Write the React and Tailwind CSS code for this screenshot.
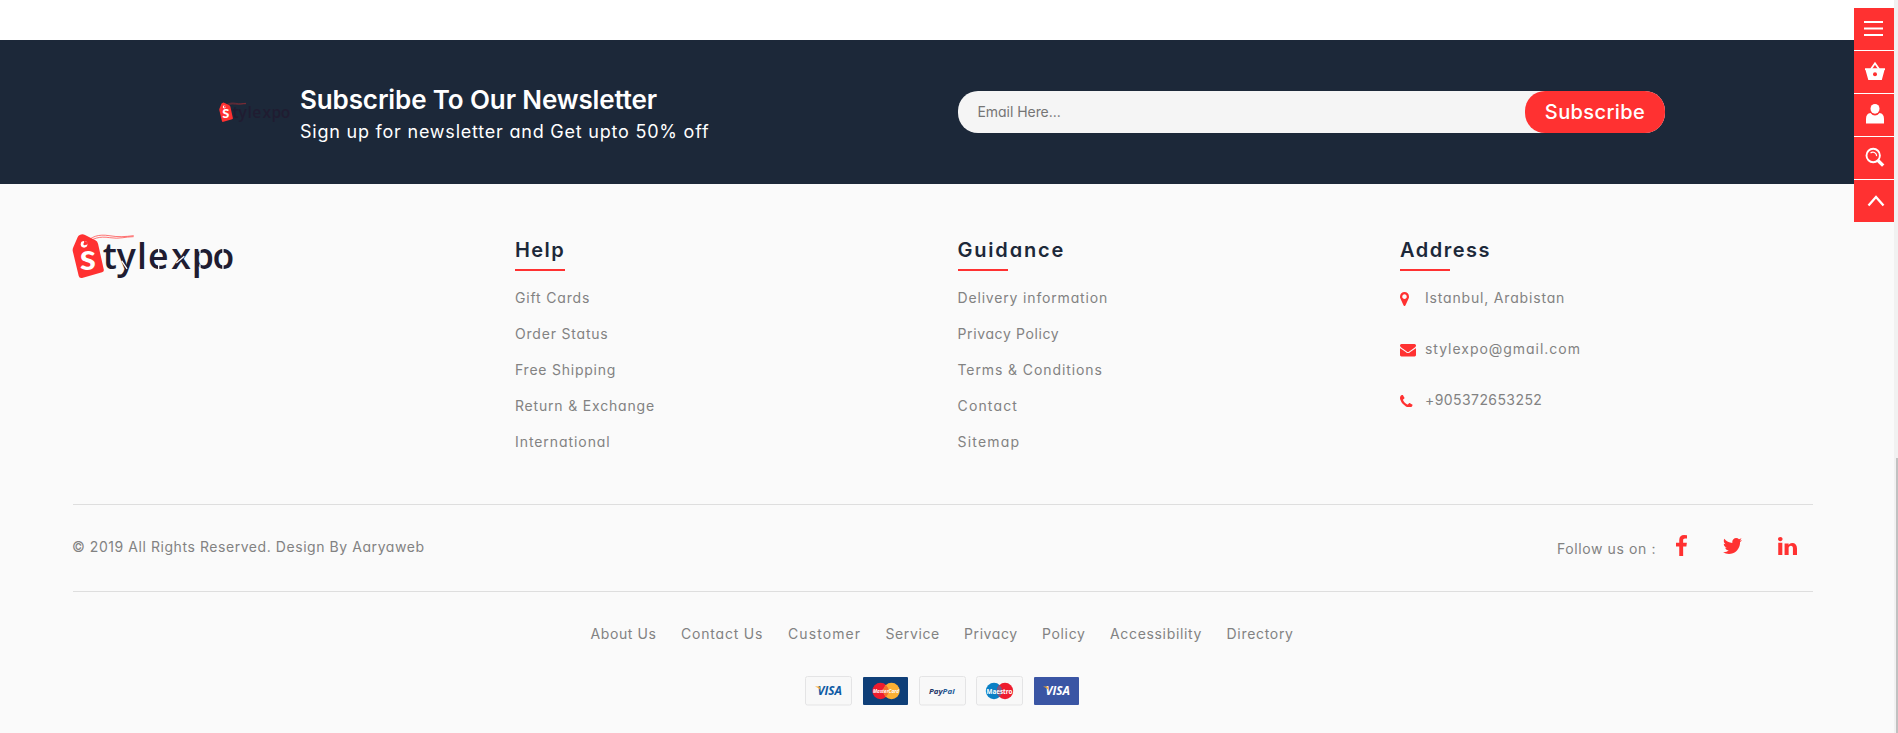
function StylexpoLogo({ className, cuts }) {
  return (
    <svg viewBox="37 38 486 139" className={`overflow-visible ${className}`} role="img" aria-label="stylexpo">
      <path d="M60 44Q68 39 76 44L107 60Q113 63 115 70L132 147Q134 154 127 156L67 173Q59 175 57 167L39 92Q38 86 41 80L54 50Q56 46 60 44Z" fill="#ff3131" />
      <circle cx="73" cy="72" r="10" fill="#fff" />
      <path d="M73 72V62A10 10 0 0 1 83 73Z" fill="#ff3131" />
      <circle cx="75" cy="71" r="4" fill="#ff3131" />
      <path d="M78 70C92 48 118 41 148 46S196 49 222 46M80 72C96 54 120 47 150 52S196 49 222 49" fill="none" stroke="#ff3131" strokeWidth="2" />
      <text x="60" y="149" fontFamily="Lato, sans-serif" fontWeight="700" fontSize="111" fill="#fff">s</text>
      <text x="129 171 232 265 335 396 459" y="147" fontFamily="Open Sans, sans-serif" fontWeight="600" fontSize="107" fill="#201c31">tylexpo</text>
      {cuts && <path d="M297 84V104M297 130V152M350 128L374 108M421 84V102M421 132V152M490 84V102M490 132V152M186 122L202 146" stroke="#fafafa" strokeWidth="4" />}
    </svg>
  );
}

function Icon({ box, d, className }) {
  return (
    <svg viewBox={box} className={className} preserveAspectRatio="none" fill="#ff3131" aria-hidden="true">
      <path d={d} />
    </svg>
  );
}

const PIN = "M1152 640q0-106-75-181t-181-75-181 75-75 181 75 181 181 75 181-75 75-181zm256 0q0 109-33 179l-364 774q-16 33-47.5 52t-67.5 19-67.5-19-46.5-52l-365-774q-33-70-33-179 0-212 150-362t362-150 362 150 150 362z";
const ENVELOPE = "M1792 710v794q0 66-47 113t-113 47h-1472q-66 0-113-47t-47-113v-794q44 49 101 87 362 246 497 345 57 42 92.5 65.5t94.5 48 110 24.5h2q51 0 110-24.5t94.5-48 92.5-65.5q170-123 498-345 57-39 100-87zm0-294q0 79-49 151t-122 123q-376 261-468 325-10 7-42.5 31t-54 38.8-52 32.5-57.5 27-50 9h-2q-23 0-50-9t-57.5-27-52-32.5-54-38.8-42.5-31q-91-64-262-182.5t-205-142.5q-62-42-117-115.5t-55-136.5q0-78 41.5-130t118.5-52h1472q65 0 112.5 47t47.5 113z";
const PHONE = "M1600 1240q0 27-10 70.5t-21 68.5q-21 50-122 106-94 51-186 51-27 0-53-3.5t-57.5-12.5-47-14.5-55.5-20.5-49-18q-98-35-175-83-127-79-264-216t-216-264q-48-77-83-175-3-9-18-49t-20.5-55.5-14.5-47-12.5-57.5-3.5-53q0-92 51-186 56-101 106-122 25-11 68.5-21t70.5-10q14 0 21 3 18 6 53 76 11 19 30 54t35 63.5 31 53.5q3 4 17.5 25t21.5 35.5 7 28.5q0 20-28.5 50t-62 55-62 53-28.5 46q0 9 5 22.5t8.5 20.5 14 24 11.5 19q76 137 174 235t235 174q2 1 19 11.5t24 14 20.5 8.5 22.5 5q18 0 46-28.5t53-62 55-62 50-28.5q14 0 28.5 7t35.5 21.5 25 17.5q25 15 53.5 31t63.5 35 54 30q70 35 76 53 3 7 3 21z";
const FACEBOOK = "M1343 12v264h-157q-86 0-116 36t-30 108v189h293l-39 296h-254v759h-306v-759h-255v-296h255v-218q0-186 104-288.5t277-102.5q147 0 228 12z";
const TWITTER = "M1684 408q-67 98-162 167 1 14 1 42 0 130-38 259.5t-115.5 248.5-184.5 210.5-258 146-323 54.5q-271 0-496-145 35 4 78 4 225 0 401-138-105-2-188-64.5t-114-159.5q33 5 61 5 43 0 85-11-112-23-185.5-111.5t-73.5-205.5v-4q68 38 146 41-66-44-105-115t-39-154q0-88 44-163 121 149 294.5 238.5t371.5 99.5q-8-38-8-74 0-134 94.5-228.5t228.5-94.5q140 0 236 102 109-21 205-78-37 115-142 178 93-10 186-50z";
const LINKEDIN = "M477 625v991h-330v-991h330zm21-306q1 73-50.5 122t-135.5 49h-2q-82 0-132-49t-50-122q0-74 51.5-122.5t134.5-48.5 133 48.5 51 122.5zm1166 729v568h-329v-530q0-105-40.5-164.5t-126.5-59.5q-63 0-105.5 34.5t-63.5 85.5q-11 30-11 81v553h-329q2-399 2-647t-1-296l-1-3h329v144h-2q20-32 41-56t56.5-52 87-43.5 114.5-15.5q171 0 275 113.5t104 332.5z";

const HELP = [
  ["Gift Cards", "tracking-[0.84px]"],
  ["Order Status", "tracking-[0.8px]"],
  ["Free Shipping", "tracking-[0.76px]"],
  ["Return & Exchange", "tracking-[0.81px]"],
  ["International", "tracking-[0.93px]"],
];
const GUIDANCE = [
  ["Delivery information", "tracking-[0.83px]"],
  ["Privacy Policy", "tracking-[0.62px]"],
  ["Terms & Conditions", "tracking-[0.9px]"],
  ["Contact", "tracking-[1.15px]"],
  ["Sitemap", "tracking-[1.2px]"],
];
const BOTTOM = [
  ["About Us", "w-[90.5px] tracking-[0.6px]"],
  ["Contact Us", "w-[107px] tracking-[0.8px]"],
  ["Customer", "w-[97.5px] tracking-[1.1px]"],
  ["Service", "w-[78.5px] tracking-[0.6px]"],
  ["Privacy", "w-[78px] tracking-[0.6px]"],
  ["Policy", "w-[68px] tracking-[0.65px]"],
  ["Accessibility", "w-[116.5px] tracking-[0.67px]"],
  ["Directory", "w-[68px] tracking-[0.7px]"],
];

function Heading({ children, tracking }) {
  return (
    <>
      <h3 className={`h-[30px] text-xl leading-[30px] font-semibold text-[#1c2839] ${tracking}`}>{children}</h3>
      <div className="mt-1 mb-[9px] h-0.5 w-[50px] bg-[#ff3131]" />
    </>
  );
}

function LinkColumn({ title, tracking, links }) {
  return (
    <div className="w-[442.5px] shrink-0">
      <Heading tracking={tracking}>{title}</Heading>
      <ul>
        {links.map(([label, t]) => (
          <li key={label} className={`h-9 leading-9 ${t}`}>{label}</li>
        ))}
      </ul>
    </div>
  );
}

function AddressRow({ icon, children }) {
  return (
    <li className="flex h-9 items-center">
      <span className="flex w-[25px] pt-0.5">{icon}</span>
      {children}
    </li>
  );
}

function Visa({ fill }) {
  return (
    <>
      <text x="12.5" y="18.9" fontFamily="Open Sans, sans-serif" fontStyle="italic" fontWeight="700" fontSize="11.5" textLength="24.5" lengthAdjust="spacingAndGlyphs" fill={fill}>VISA</text>
      <path d="M10 10.400H14.500L15.800 14.500Q14 11.400 10 10.400Z" fill="#f3a72d" />
    </>
  );
}

function Card({ children }) {
  return (
    <div className="h-[30px] w-[47px]">
      <svg viewBox="0 0 47 30" className="h-full w-full">{children}</svg>
    </div>
  );
}

const PLAIN = <rect x="0.5" y="0.5" width="46" height="28.5" rx="2" fill="#f8f8f8" stroke="#e4e4e5" />;

export default function App() {
  return (
    <div className="relative h-[733px] w-full overflow-hidden bg-[#fafafa] font-['Inter',sans-serif] text-sm text-[#828282] [font-feature-settings:'cv11']">
      <div className="h-10 bg-white" />

      <section className="flex h-36 bg-[#1c2839] pl-[219px]">
        <div className="flex w-[81px] pt-[62px]">
          <StylexpoLogo className="h-[20.5px] w-[71px]" />
        </div>
        <div className="w-[657.5px] pt-[43px] text-white">
          <h2 className="h-[34px] text-[26px] leading-[34px] font-semibold tracking-[-0.12px] whitespace-nowrap">Subscribe To Our Newsletter</h2>
          <p className="mt-px h-7 text-lg leading-7 tracking-[0.78px] whitespace-nowrap">Sign up for newsletter and Get upto 50% off</p>
        </div>
        <div className="mt-[51px] flex h-[42px] w-[707.5px] justify-between rounded-[20px] bg-[#f5f5f5] pl-5">
          <span className="leading-[42px] tracking-[-0.05px] text-[#757575]">Email Here...</span>
          <button className="h-[42px] w-[140px] rounded-[20px] bg-[#ff3131] text-xl font-medium tracking-[0.4px] text-white">Subscribe</button>
        </div>
      </section>

      <footer className="mr-[85px] ml-[73px]">
        <div className="flex h-80 pt-[51px]">
          <div className="w-[442px] shrink-0">
            <StylexpoLogo cuts className="-mt-[2.3px] -ml-[0.7px] h-[46.3px] w-[162px]" />
          </div>
          <LinkColumn title="Help" tracking="tracking-[1.4px]" links={HELP} />
          <LinkColumn title="Guidance" tracking="tracking-[1.8px]" links={GUIDANCE} />
          <div>
            <Heading tracking="tracking-[1.5px]">Address</Heading>
            <ul className="flex flex-col gap-[15px]">
              <AddressRow icon={<Icon box="384 128 1024 1536" d={PIN} className="h-3.5 w-[9px]" />}>
                <span className="tracking-[0.82px]">Istanbul, Arabistan</span>
              </AddressRow>
              <AddressRow icon={<Icon box="0 256 1792 1408" d={ENVELOPE} className="mt-px h-[12.5px] w-4" />}>
                <span className="tracking-[0.97px]">stylexpo@gmail.com</span>
              </AddressRow>
              <AddressRow icon={<Icon box="192 128 1408 1408" d={PHONE} className="h-[12.5px] w-[12.5px]" />}>
                <span className="tracking-[0.42px]">+905372653252</span>
              </AddressRow>
            </ul>
          </div>
        </div>

        <div className="flex h-[88px] justify-between border-y border-[#dedede]">
          <p className="-ml-px h-[84px] leading-[84px] tracking-[0.56px]">© 2019 All Rights Reserved. Design By Aaryaweb</p>
          <div className="flex h-[85px] items-center pr-4">
            <span className="w-[119px] pt-[2px] tracking-[0.6px]">Follow us on :</span>
            <Icon box="479 0 864 1664" d={FACEBOOK} className="mr-9 -mt-1 h-[21px] w-[11px]" />
            <Icon box="108 256 1576 1280" d={TWITTER} className="mr-9 -mt-1 h-4 w-[19px]" />
            <Icon box="128 148 1536 1468" d={LINKEDIN} className="-mt-1 h-[18px] w-[19px]" />
          </div>
        </div>

        <ul className="mt-7 ml-[517.5px] flex h-7 leading-7 whitespace-nowrap">
          {BOTTOM.map(([label, c]) => (
            <li key={label} className={c}>{label}</li>
          ))}
        </ul>

        <div className="mt-7 ml-[732px] flex gap-2.5">
          <Card>
            {PLAIN}
            <Visa fill="#0f5ba5" />
          </Card>
          <Card>
            <rect x="1" y="1" width="45" height="28" rx="1" fill="#0f3f78" />
            <circle cx="18.500" cy="15" r="8.200" fill="#ee1c2e" />
            <circle cx="29.500" cy="15" r="8.200" fill="#fbb034" />
            <path d="M24 9A8.200 8.200 0 0 1 24 21A8.200 8.200 0 0 1 24 9Z" fill="#f26f30" />
            <text x="11" y="17.2" fontFamily="Open Sans, sans-serif" fontStyle="italic" fontWeight="700" fontSize="6" textLength="26" lengthAdjust="spacingAndGlyphs" fill="#fff">MasterCard</text>
          </Card>
          <Card>
            {PLAIN}
            <text x="10" y="17.5" fontFamily="Open Sans, sans-serif" fontStyle="italic" fontWeight="700" fontSize="7.8" textLength="25.5" lengthAdjust="spacingAndGlyphs" fill="#1f3567">Pay<tspan fill="#235c97">Pal</tspan></text>
          </Card>
          <Card>
            {PLAIN}
            <circle cx="18" cy="15" r="8.200" fill="#0a80c5" />
            <circle cx="29" cy="15" r="8.200" fill="#ee1c2e" />
            <path d="M23.500 9A8.200 8.200 0 0 1 23.500 21A8.200 8.200 0 0 1 23.500 9Z" fill="#7b5a86" />
            <text x="10.5" y="17.7" fontFamily="Open Sans, sans-serif" fontWeight="700" fontSize="7.5" textLength="26" lengthAdjust="spacingAndGlyphs" fill="#fff">Maestro</text>
          </Card>
          <Card>
            <rect x="1" y="1" width="45" height="28" rx="1" fill="#3a55a4" />
            <Visa fill="#fff" />
          </Card>
        </div>
      </footer>

      <nav className="absolute top-2 right-1 flex w-10 flex-col gap-px bg-white">
        <button className="h-[42px] bg-[#ff3131]">
          <svg viewBox="0 0 40 42" className="h-full w-full"><path d="M10 14H29M10 20.500H29M10 27H29" stroke="#fff" strokeWidth="2.200" /></svg>
        </button>
        <button className="h-[42px] bg-[#ff3131]">
          <svg viewBox="0 0 40 42" className="h-full w-full">
            <path d="M11 17.300H31V19H30.500L27.800 29H14.300L11.500 19H11Z" fill="#fff" />
            <path d="M17 18L21 12.300L25 18" fill="none" stroke="#fff" strokeWidth="1.800" />
            <circle cx="21" cy="23.300" r="2" fill="#ff3131" />
          </svg>
        </button>
        <button className="h-[42px] bg-[#ff3131]">
          <svg viewBox="0 0 40 42" className="h-full w-full" fill="#fff">
            <ellipse cx="21" cy="14.800" rx="4.500" ry="4.900" />
            <path d="M12 29.500V25Q12 19.500 16.500 19Q18.500 21.500 21 21.500T25.500 19Q30 19.500 30 25V29.500Z" />
          </svg>
        </button>
        <button className="h-[42px] bg-[#ff3131]">
          <svg viewBox="0 0 40 42" className="h-full w-full" fill="none" stroke="#fff">
            <circle cx="19.200" cy="18.500" r="6.700" strokeWidth="1.900" />
            <path d="M16.500 16Q19.500 13.800 22 16.800Q22.800 18 22.500 19.200" strokeWidth="1.200" />
            <path d="M23.500 23L29.200 28.700" strokeWidth="3.300" />
          </svg>
        </button>
        <button className="h-[42px] bg-[#ff3131]">
          <svg viewBox="0 0 40 42" className="h-full w-full"><path d="M14.500 25.500L22 17L29.500 25.500" fill="none" stroke="#fff" strokeWidth="2.300" /></svg>
        </button>
      </nav>

      <div className="absolute top-0 right-0 flex h-full w-1 items-end justify-end bg-[#f1f1f1]">
        <div className="h-[275px] w-0.5 bg-[#c1c1c1]" />
      </div>
    </div>
  );
}
